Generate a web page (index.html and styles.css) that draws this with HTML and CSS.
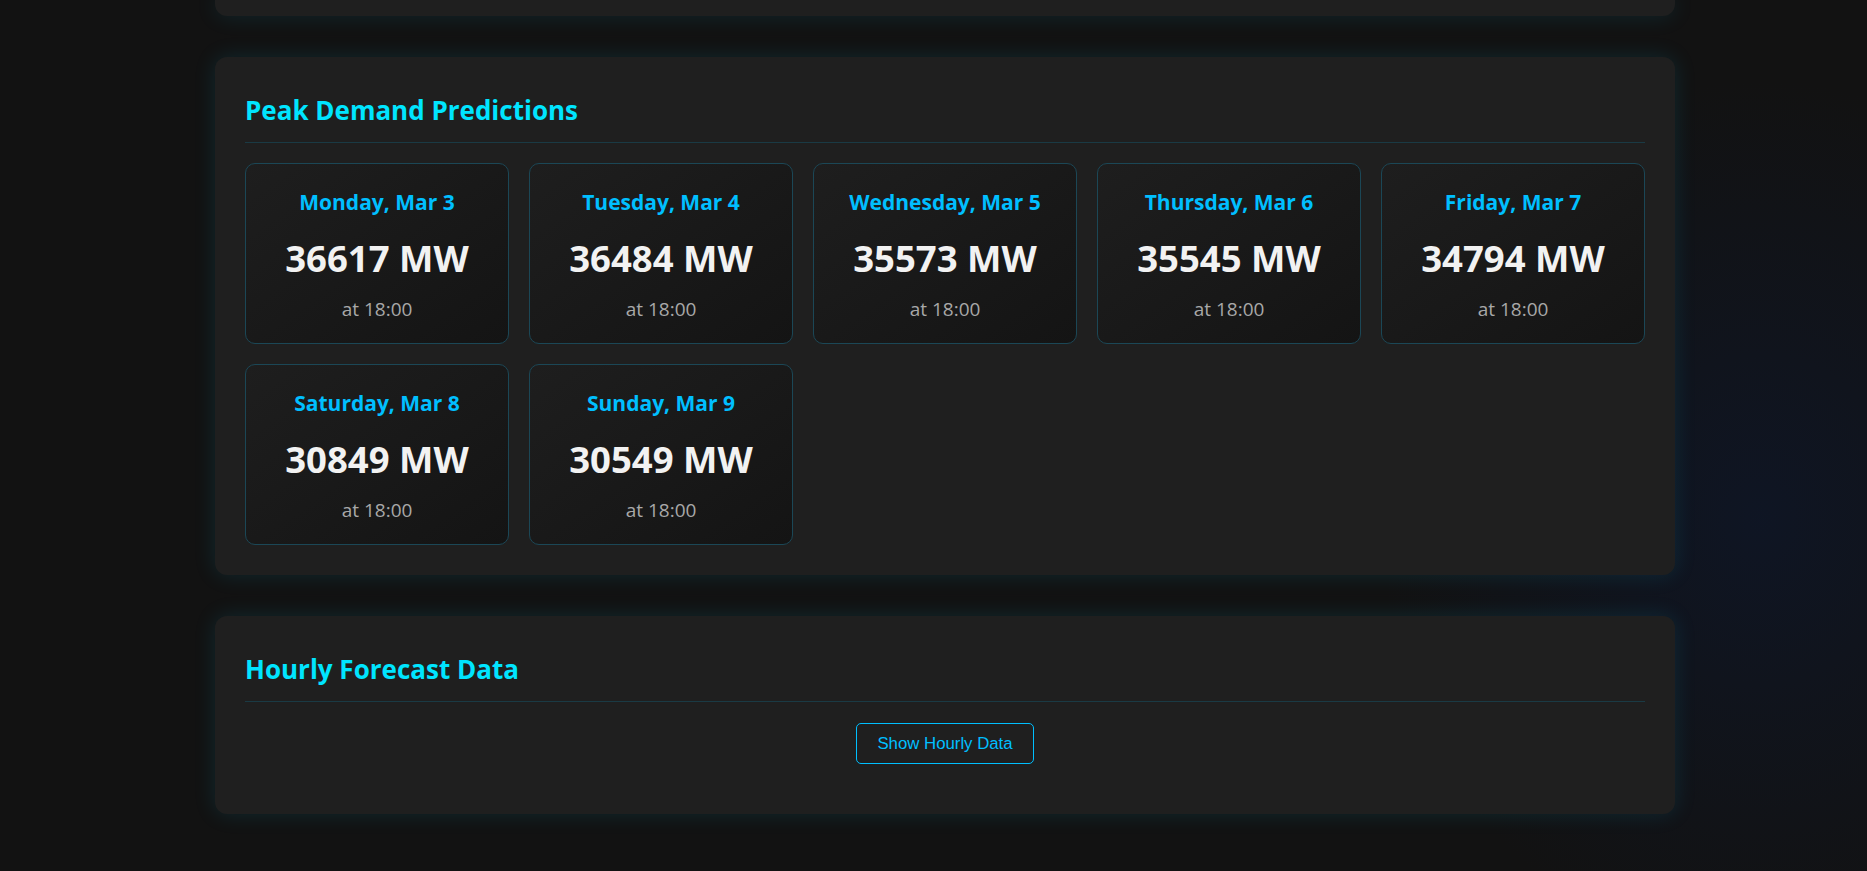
FILE: index.html
```html
<!DOCTYPE html>
<html lang="en">
<head>
<meta charset="utf-8">
<title>Peak Demand Predictions</title>
<link rel="stylesheet" href="styles.css">
</head>
<body>
<div class="page">
  <main class="container">
    <section class="card card-stub"></section>

    <section class="card">
      <h2 class="card-title">Peak Demand Predictions</h2>
      <div class="peak-grid">
        <div class="peak">
          <div class="peak-day">Monday, Mar 3</div>
          <div class="peak-value">36617 MW</div>
          <div class="peak-time">at 18:00</div>
        </div>
        <div class="peak">
          <div class="peak-day">Tuesday, Mar 4</div>
          <div class="peak-value">36484 MW</div>
          <div class="peak-time">at 18:00</div>
        </div>
        <div class="peak">
          <div class="peak-day">Wednesday, Mar 5</div>
          <div class="peak-value">35573 MW</div>
          <div class="peak-time">at 18:00</div>
        </div>
        <div class="peak">
          <div class="peak-day">Thursday, Mar 6</div>
          <div class="peak-value">35545 MW</div>
          <div class="peak-time">at 18:00</div>
        </div>
        <div class="peak">
          <div class="peak-day">Friday, Mar 7</div>
          <div class="peak-value">34794 MW</div>
          <div class="peak-time">at 18:00</div>
        </div>
        <div class="peak">
          <div class="peak-day">Saturday, Mar 8</div>
          <div class="peak-value">30849 MW</div>
          <div class="peak-time">at 18:00</div>
        </div>
        <div class="peak">
          <div class="peak-day">Sunday, Mar 9</div>
          <div class="peak-value">30549 MW</div>
          <div class="peak-time">at 18:00</div>
        </div>
      </div>
    </section>

    <section class="card">
      <h2 class="card-title">Hourly Forecast Data</h2>
      <div class="toggle-row">
        <button class="toggle-btn" type="button">Show Hourly Data</button>
      </div>
    </section>
  </main>
</div>
</body>
</html>
```

FILE: styles.css
```css
html, body {
  margin: 0;
  padding: 0;
}

body {
  min-height: 100vh;
  background-color: #121212;
  background-image: radial-gradient(ellipse 380px 440px at 1760px 520px, rgba(14, 22, 40, 0.8) 0%, rgba(18, 18, 18, 0) 100%);
  font-family: "Segoe UI", "Open Sans", "Noto Sans", sans-serif;
  color: #f0f0f0;
}

.page {
  padding-left: 23px;
}

.container {
  max-width: 1460px;
  margin: 0 auto;
  display: flex;
  flex-direction: column;
  gap: 41px;
  padding-bottom: 40px;
}

.card {
  background: #1f1f1f;
  border-radius: 12px;
  padding: 30px;
  box-shadow: 0 0 22px rgba(0, 195, 240, 0.13);
}

.card-stub {
  height: 16px;
  padding: 0;
  border-top-left-radius: 0;
  border-top-right-radius: 0;
}

.card-title {
  margin: 0 0 20px;
  padding: 1px 0 10px;
  font-size: 26px;
  line-height: 44px;
  font-weight: 700;
  color: #00e5ff;
  border-bottom: 1px solid #1a3a44;
}

.peak-grid {
  display: grid;
  grid-template-columns: repeat(5, 1fr);
  gap: 20px;
}

.peak {
  height: 181px;
  box-sizing: border-box;
  padding: 24px 8px 0;
  text-align: center;
  border: 1px solid #1b4756;
  border-radius: 10px;
  background: linear-gradient(145deg, #1e1e1e 0%, #141414 100%);
}

.peak-day {
  font-size: 21px;
  line-height: 28px;
  font-weight: 700;
  color: #00bfff;
}

.peak-value {
  margin-top: 20px;
  font-size: 36.5px;
  line-height: 44px;
  font-weight: 700;
  color: #f2f2f2;
}

.peak-time {
  margin-top: 16px;
  font-size: 19px;
  line-height: 26px;
  color: #a8a8a8;
}

.toggle-row {
  display: flex;
  justify-content: center;
  padding: 1px 0 20px;
}

.toggle-btn {
  font-family: "Liberation Sans", Arial, sans-serif;
  font-size: 16.8px;
  line-height: 19px;
  padding: 10px 20px;
  color: #00bfff;
  background: transparent;
  border: 1px solid #00bfff;
  border-radius: 5px;
  cursor: pointer;
}
```
